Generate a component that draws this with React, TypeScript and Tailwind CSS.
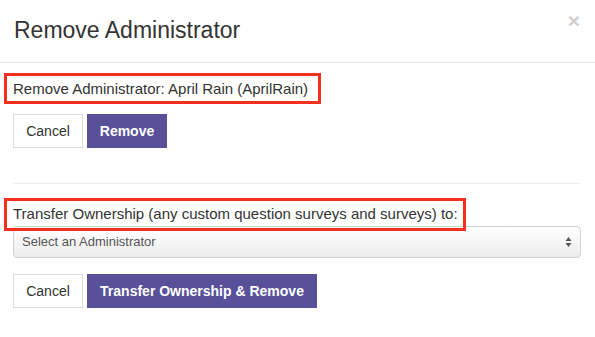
export default function App() {
  return (
    <main className="w-[595px] h-[337px] bg-white text-[#333] font-['Liberation_Sans',Arial,sans-serif] overflow-hidden">
      {/* Header */}
      <header className="relative h-[63px] border-b border-[#e5e5e5] px-[14px] flex items-center">
        <h1 className="text-[23px] leading-none text-[#333] -mt-[1px]">Remove Administrator</h1>
        <span className="absolute right-[15px] top-[8px] text-[21px] font-bold leading-[26px] text-[#cfcfcf]">×</span>
      </header>

      <div className="pl-[13px] pr-[14px] pt-[16px]">
        {/* Remove */}
        <div className="flex">
          <span className="relative block text-[15px] leading-[20px]">
            Remove Administrator: April Rain (AprilRain)
            <span className="absolute -left-[9px] -right-[13px] -top-[6px] -bottom-[5px] border-[3px] border-[#f5301e]" />
          </span>
        </div>
        <div className="mt-[15px] flex gap-[4px]">
          <button className="h-[34px] w-[70px] border border-[#ddd] bg-white text-[14px] text-[#333]">Cancel</button>
          <button className="h-[34px] w-[80px] bg-[#58519a] text-[14px] font-bold text-white">Remove</button>
        </div>

        <div className="mt-[35px] border-t border-[#eee]" />

        {/* Transfer */}
        <div className="mt-[20px] flex">
          <span className="relative block text-[15px] leading-[20px]">
            Transfer Ownership (any custom question surveys and surveys) to:
            <span className="absolute -left-[9px] -right-[8px] -top-[6px] -bottom-[7px] border-[3px] border-[#f5301e] z-10" />
          </span>
        </div>
        <div className="mt-[2px] relative h-[32px] rounded-[4px] border border-[#d2d2d2] bg-gradient-to-b from-white to-[#ececec] flex items-center pl-[8px] pr-[8px]">
          <span className="text-[13px] text-[#555]">Select an Administrator</span>
          <svg className="ml-auto" width="7" height="12" viewBox="0 0 7 12">
            <path d="M3.5 1 L6.5 5 L0.5 5 Z" fill="#555" />
            <path d="M3.5 11 L6.5 7 L0.5 7 Z" fill="#555" />
          </svg>
        </div>
        <div className="mt-[16px] flex gap-[4px]">
          <button className="h-[34px] w-[70px] border border-[#ddd] bg-white text-[14px] text-[#333]">Cancel</button>
          <button className="h-[34px] w-[230px] bg-[#58519a] text-[14px] font-bold text-white">Transfer Ownership &amp; Remove</button>
        </div>
      </div>
    </main>
  );
}
